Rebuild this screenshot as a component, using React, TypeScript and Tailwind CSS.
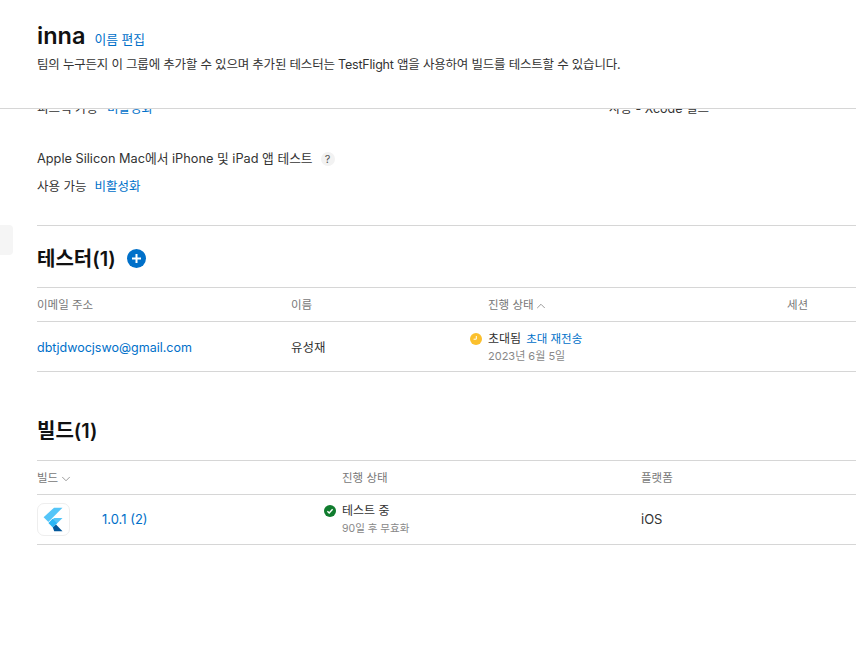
import React from 'react';
import { ChevronDown, ChevronUp } from 'lucide-react';

const FONT = "font-['Inter','Noto_Sans_CJK_KR',sans-serif]";

const FlutterIcon = () => (
  <svg viewBox="1 1 31 31" className="h-[31px] w-[31px]">
    <polygon points="17,4.7 25.5,4.7 11.4,19 6.6,14.2" fill="#54c5f8" />
    <polygon points="17,15 25.5,15 19,21.6 14.6,17.4" fill="#54c5f8" />
    <polygon points="11.4,20 15.6,15.8 20,20.2 15.8,24.4" fill="#29b6f6" />
    <polygon points="15.8,24.4 19,21.4 25.5,28.2 17.2,28.2" fill="#01579b" />
  </svg>
);

const PendingIcon = () => (
  <svg viewBox="0 0 12 12" className="h-3 w-3">
    <circle cx="6" cy="6" r="6" fill="#fbc02d" />
    <path d="M6.3 3v3.2H3.6" fill="none" stroke="#fff" strokeWidth="1" />
  </svg>
);

const DoneIcon = () => (
  <svg viewBox="0 0 12 12" className="h-3 w-3">
    <circle cx="6" cy="6" r="6" fill="#107c2e" />
    <path d="M3.4 6.2l1.8 1.8 3.4-3.7" fill="none" stroke="#fff" strokeWidth="1.4" />
  </svg>
);

const PlusIcon = () => (
  <svg viewBox="0 0 19 19" className="h-[19px] w-[19px]">
    <circle cx="9.5" cy="9.5" r="9.5" fill="#0070c9" />
    <path d="M9.5 5v9M5 9.5h9" stroke="#fff" strokeWidth="2" />
  </svg>
);

export default function App() {
  return (
    <div className={`${FONT} relative h-[647px] w-[856px] overflow-hidden bg-white text-[12.5px] text-[#333]`}>
      <div className="absolute left-0 top-[225px] h-[30px] w-[13px] rounded-r bg-[#f5f5f5]" />

      <header className="h-[109px] border-b border-[#d6d6d6] pl-[37px]">
        <div className="flex items-center pt-[21px]">
          <h1 className="text-[23.5px] leading-[30px] font-semibold text-[#111]">inna</h1>
          <a className="ml-[9px] mt-[7px] text-[12.75px] text-[#0070c9]">이름 편집</a>
        </div>
        <p className="mt-[5px] leading-[18px] tracking-[-0.2px]">
          팀의 누구든지 이 그룹에 추가할 수 있으며 추가된 테스터는 TestFlight 앱을 사용하여 빌드를 테스트할 수 있습니다.
        </p>
      </header>

      <div className="pl-[37px]">
        <div className="h-[7px] overflow-hidden">
          <div className="-mt-[7px] grid grid-cols-[572px_1fr] leading-[13px]">
            <div className="flex gap-[9px]">
              <span>피드백 가능</span>
              <a className="text-[#0070c9]">비활성화</a>
            </div>
            <span>사용 - Xcode 빌드</span>
          </div>
        </div>

        <div className="mt-[33px] flex items-center text-[12.75px] leading-[20px]">
          <span>Apple Silicon Mac에서 iPhone 및 iPad 앱 테스트</span>
          <span className="ml-[8px] flex h-[14px] w-[14px] items-center justify-center rounded-full bg-[#f2f2f2] text-[11px] text-[#555]">?</span>
        </div>
        <div className="mt-[8px] flex h-[20px] items-center gap-[8px]">
          <span>사용 가능</span>
          <a className="text-[#0070c9]">비활성화</a>
        </div>

        <section className="mt-[28px] border-t border-[#d6d6d6]">
          <div className="flex h-[61px] items-center pt-[4px]">
            <h2 className="text-[20px] leading-[24px] font-semibold text-[#111]">테스터(1)</h2>
            <span className="ml-[11px]"><PlusIcon /></span>
          </div>
          <div className="grid h-[35px] grid-cols-[254px_179px_317px_1fr] items-center border-y border-[#d6d6d6] pt-[2px] text-[11.5px] text-[#777]">
            <span>이메일 주소</span>
            <span>이름</span>
            <span className="flex items-center pl-[18px]">진행 상태 <ChevronUp size={14} strokeWidth={1.25} /></span>
            <span>세션</span>
          </div>
          <div className="grid h-[50px] grid-cols-[254px_179px_317px_1fr] items-center border-b border-[#d6d6d6]">
            <a className="pt-[3px] text-[#0070c9]">dbtjdwocjswo@gmail.com</a>
            <span className="pt-[3px]">유성재</span>
            <div className="flex items-start gap-[6px] pt-[1px]">
              <span className="mt-[3px]"><PendingIcon /></span>
              <div>
                <div className="flex gap-[5px] leading-[18px]">
                  <span className="text-[12px]">초대됨</span>
                  <a className="text-[11.5px] text-[#0070c9]">초대 재전송</a>
                </div>
                <div className="text-[11px] leading-[17px] text-[#888]">2023년 6월 5일</div>
              </div>
            </div>
          </div>
        </section>

        <section>
          <div className="flex h-[88px] items-end pb-[17px]">
            <h2 className="text-[20px] leading-[24px] font-semibold text-[#111]">빌드(1)</h2>
          </div>
          <div className="grid h-[35px] grid-cols-[287px_317px_1fr] items-center border-y border-[#d6d6d6] pt-[2px] text-[11.5px] text-[#777]">
            <span className="flex items-center gap-[1px]">빌드 <ChevronDown size={14} strokeWidth={1.25} /></span>
            <span className="pl-[18px]">진행 상태</span>
            <span>플랫폼</span>
          </div>
          <div className="grid h-[50px] grid-cols-[287px_317px_1fr] items-center border-b border-[#d6d6d6]">
            <div className="flex items-center">
              <div className="h-[33px] w-[33px] rounded-[7px] border border-[#eeeeee]"><FlutterIcon /></div>
              <a className="ml-[32px] pt-[1px] text-[13px] text-[#0070c9]">1.0.1 (2)</a>
            </div>
            <div className="flex items-start gap-[6px] pt-[1px]">
              <span className="mt-[3px]"><DoneIcon /></span>
              <div>
                <div className="text-[12px] leading-[18px]">테스트 중</div>
                <div className="text-[10.5px] leading-[18px] text-[#888]">90일 후 무효화</div>
              </div>
            </div>
            <span className="text-[13px]">iOS</span>
          </div>
        </section>
      </div>
    </div>
  );
}
